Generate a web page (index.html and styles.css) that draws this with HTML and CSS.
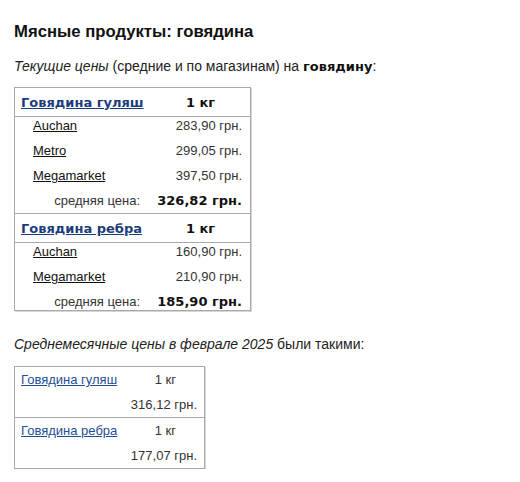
FILE: index.html
```html
<!DOCTYPE html>
<html>
<head>
<meta charset="utf-8">
<link rel="stylesheet" href="styles.css">
</head>
<body>
<div class="page">
  <h1 class="title">Мясные продукты: говядина</h1>
  <p class="intro"><i>Текущие цены</i> (средние и по магазинам) на <b>говядину</b>:</p>

  <table class="prices">
    <tbody class="group">
      <tr class="head"><td class="name"><a href="#">Говядина гуляш</a></td><td class="unit">1 кг</td></tr>
      <tr class="row"><td class="store"><a href="#">Auchan</a></td><td class="price">283,90 грн.</td></tr>
      <tr class="row"><td class="store"><a href="#">Metro</a></td><td class="price">299,05 грн.</td></tr>
      <tr class="row"><td class="store"><a href="#">Megamarket</a></td><td class="price">397,50 грн.</td></tr>
      <tr class="row avg"><td class="avg-label">средняя цена:</td><td class="avg-value">326,82 грн.</td></tr>
    </tbody>
    <tbody class="group">
      <tr class="head"><td class="name"><a href="#">Говядина ребра</a></td><td class="unit">1 кг</td></tr>
      <tr class="row"><td class="store"><a href="#">Auchan</a></td><td class="price">160,90 грн.</td></tr>
      <tr class="row"><td class="store"><a href="#">Megamarket</a></td><td class="price">210,90 грн.</td></tr>
      <tr class="row avg last"><td class="avg-label">средняя цена:</td><td class="avg-value">185,90 грн.</td></tr>
    </tbody>
  </table>

  <p class="intro second"><i>Среднемесячные цены в феврале 2025</i> были такими:</p>

  <table class="monthly">
    <tbody class="mgroup">
      <tr><td class="mname"><a href="#">Говядина гуляш</a></td><td class="munit">1 кг</td></tr>
      <tr><td></td><td class="mprice">316,12 грн.</td></tr>
    </tbody>
    <tbody class="mgroup">
      <tr><td class="mname"><a href="#">Говядина ребра</a></td><td class="munit">1 кг</td></tr>
      <tr><td></td><td class="mprice">177,07 грн.</td></tr>
    </tbody>
  </table>
</div>
</body>
</html>
```
FILE: styles.css
```css
html, body {
  margin: 0;
  padding: 0;
  background: #fff;
}
.page {
  padding: 0 14px;
  font-family: "Liberation Sans", Arial, sans-serif;
  color: #222;
}
.title {
  margin: 0;
  padding-top: 22px;
  font-size: 16.7px;
  line-height: 20px;
  font-weight: bold;
  color: #111;
}
.intro {
  margin: 16px 0 0;
  font-size: 14px;
  line-height: 17px;
  color: #222;
}
.intro b {
  font-family: "DejaVu Sans", Verdana, sans-serif;
  font-size: 13px;
  color: #111;
}

.prices {
  margin-top: 12px;
  border-collapse: collapse;
  border: 1px solid #a9a9a9;
  box-shadow: 1px 1px 0 #d6d6d6;
  width: 237px;
}
.prices td { padding: 0; }
.group + .group .head td { border-top: 1px solid #a9a9a9; }
.head td {
  height: 28px;
  border-bottom: 1px solid #a9a9a9;
  font-family: "DejaVu Sans", Verdana, sans-serif;
  font-weight: bold;
  font-size: 13px;
}
.head .name { padding-left: 6px; width: 130px; }
.head .name a { color: #1c3d7d; }
.head .unit { text-align: center; color: #111; }
.row td {
  height: 24px;
  padding-top: 1px;
  vertical-align: top;
  font-size: 13px;
  line-height: 15px;
}
.row.avg td { height: 20px; }
.row.last td { height: 16px; }
.store { padding-left: 18px !important; }
.store a { color: #111; }
.price { text-align: right; padding-right: 8px !important; color: #333; }
.avg-label { text-align: right; padding-right: 11px !important; color: #333; }
.avg-value {
  text-align: right;
  padding-right: 8px !important;
  font-family: "DejaVu Sans", Verdana, sans-serif;
  font-weight: bold;
  font-size: 13px !important;
  color: #111;
  white-space: nowrap;
}

.second { margin-top: 25px; }

.monthly {
  margin-top: 13px;
  border-collapse: collapse;
  border: 1px solid #a9a9a9;
  box-shadow: 1px 1px 0 #d6d6d6;
  width: 191px;
}
.monthly td {
  padding: 0;
  height: 25px;
  font-size: 13px;
  color: #333;
}
.mgroup + .mgroup tr:first-child td { border-top: 1px solid #a9a9a9; }
.mname { padding-left: 6px !important; width: 120px; }
.mname a { color: #1e4f96; }
.munit { text-align: center; padding-right: 4px !important; }
.mprice { text-align: right; padding-right: 7px !important; white-space: nowrap; }
```
